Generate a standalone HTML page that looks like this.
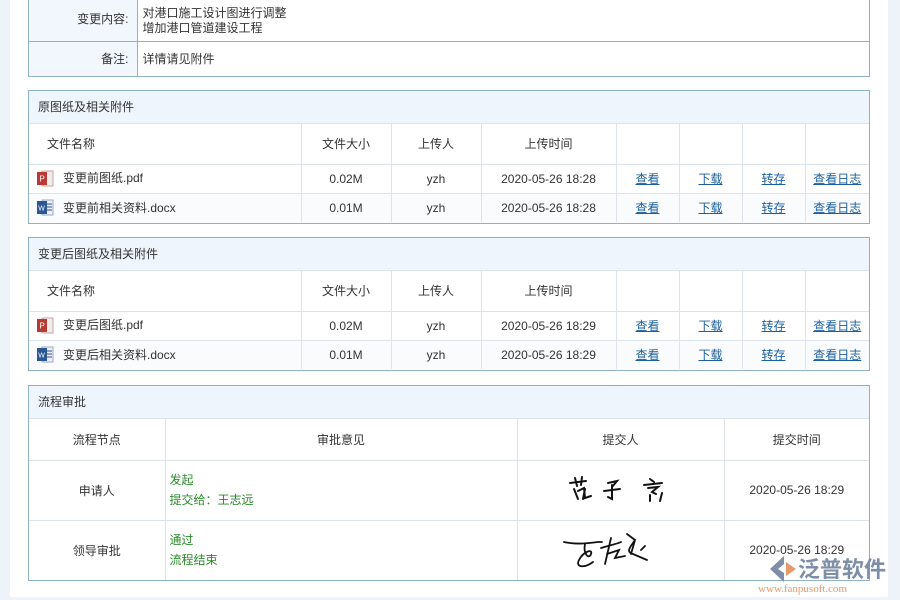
<!DOCTYPE html>
<html><head><meta charset="utf-8"><style>
*{box-sizing:border-box;margin:0;padding:0}
html,body{width:900px;height:600px;overflow:hidden}
body{background:#eef3fa;font-family:"Liberation Sans","Noto Sans CJK SC",sans-serif;font-size:12px;color:#333;position:relative}
.main{position:absolute;left:10px;top:0;width:878px;height:597px;background:#fff}
.box{position:absolute;left:28px;width:842px;border:1px solid #8fb1c8;overflow:hidden}
table{border-collapse:collapse;width:100%;table-layout:fixed}
td{border:1px solid #dde3ea;text-align:center;padding:0}
.hd{background:#eff5fd;height:33px;line-height:32px;padding-left:9px;border-bottom:1px solid #dde3ea}
a{color:#1a5f9e;text-decoration:underline}
.nm{text-align:left;padding-left:8px}
.ic{display:inline-block;width:17px;height:17px;vertical-align:middle;margin-right:9px;position:relative;top:-1px}
.alt td{background:#fafbfc}
.g{color:#2a8a2a;text-align:left;padding-left:4px;line-height:20px}
</style></head><body>
<div class="main"></div>
<div class="box" style="top:-4px;height:81px">
<table style="height:79px">
<tr style="height:44px"><td style="width:108px;background:#f2f7fd;text-align:right;padding-right:8px;border-color:#8fb1c8;border-left:0;border-top:0">变更内容:</td><td style="text-align:left;padding-left:5px;line-height:15px;border-color:#8fb1c8;border-right:0;border-top:0;padding-top:4px">对港口施工设计图进行调整<br>增加港口管道建设工程</td></tr>
<tr><td style="background:#f2f7fd;text-align:right;padding-right:8px;border-color:#8fb1c8;border-left:0;border-bottom:0">备注:</td><td style="text-align:left;padding-left:5px;border-color:#8fb1c8;border-right:0;border-bottom:0">详情请见附件</td></tr>
</table></div>

<div class="box" style="top:90px;height:134px"><div class="hd">原图纸及相关附件</div>
<table>
<tr style="height:40px"><td style="width:272px;text-align:left;padding-left:18px;border-left:0;border-top:0">文件名称</td><td style="width:90px;border-top:0">文件大小</td><td style="width:90px;border-top:0">上传人</td><td style="width:135px;border-top:0">上传时间</td><td style="width:63px;border-top:0"></td><td style="width:63px;border-top:0"></td><td style="width:63px;border-top:0"></td><td style="border-top:0;border-right:0"></td></tr>
<tr style="height:29px"><td class="nm" style="border-left:0"><svg class="ic" viewBox="0 0 17 17"><rect x="5" y="1" width="11" height="15" fill="#eee" stroke="#c9a0a0"/><rect x="0" y="2" width="10" height="13" fill="#b83b33"/><text x="2.5" y="11.5" font-size="8" fill="#fff" font-family="Liberation Sans">P</text></svg>变更前图纸.pdf</td><td>0.02M</td><td>yzh</td><td>2020-05-26 18:28</td><td><a>查看</a></td><td><a>下载</a></td><td><a>转存</a></td><td style="border-right:0"><a>查看日志</a></td></tr>
<tr class="alt" style="height:29px"><td class="nm" style="border-left:0;border-bottom:0"><svg class="ic" viewBox="0 0 17 17"><rect x="5" y="1" width="11" height="15" fill="#eef" stroke="#9ab"/><path d="M10 5h5M10 8h5M10 11h5" stroke="#2b5797"/><rect x="0" y="2" width="10" height="13" fill="#2b5797"/><text x="1.2" y="11.5" font-size="7" fill="#fff" font-family="Liberation Sans">W</text></svg>变更前相关资料.docx</td><td style="border-bottom:0">0.01M</td><td style="border-bottom:0">yzh</td><td style="border-bottom:0">2020-05-26 18:28</td><td style="border-bottom:0"><a>查看</a></td><td style="border-bottom:0"><a>下载</a></td><td style="border-bottom:0"><a>转存</a></td><td style="border-right:0;border-bottom:0"><a>查看日志</a></td></tr>
</table></div>

<div class="box" style="top:237px;height:134px"><div class="hd">变更后图纸及相关附件</div>
<table>
<tr style="height:40px"><td style="width:272px;text-align:left;padding-left:18px;border-left:0;border-top:0">文件名称</td><td style="width:90px;border-top:0">文件大小</td><td style="width:90px;border-top:0">上传人</td><td style="width:135px;border-top:0">上传时间</td><td style="width:63px;border-top:0"></td><td style="width:63px;border-top:0"></td><td style="width:63px;border-top:0"></td><td style="border-top:0;border-right:0"></td></tr>
<tr style="height:29px"><td class="nm" style="border-left:0"><svg class="ic" viewBox="0 0 17 17"><rect x="5" y="1" width="11" height="15" fill="#eee" stroke="#c9a0a0"/><rect x="0" y="2" width="10" height="13" fill="#b83b33"/><text x="2.5" y="11.5" font-size="8" fill="#fff" font-family="Liberation Sans">P</text></svg>变更后图纸.pdf</td><td>0.02M</td><td>yzh</td><td>2020-05-26 18:29</td><td><a>查看</a></td><td><a>下载</a></td><td><a>转存</a></td><td style="border-right:0"><a>查看日志</a></td></tr>
<tr class="alt" style="height:29px"><td class="nm" style="border-left:0;border-bottom:0"><svg class="ic" viewBox="0 0 17 17"><rect x="5" y="1" width="11" height="15" fill="#eef" stroke="#9ab"/><path d="M10 5h5M10 8h5M10 11h5" stroke="#2b5797"/><rect x="0" y="2" width="10" height="13" fill="#2b5797"/><text x="1.2" y="11.5" font-size="7" fill="#fff" font-family="Liberation Sans">W</text></svg>变更后相关资料.docx</td><td style="border-bottom:0">0.01M</td><td style="border-bottom:0">yzh</td><td style="border-bottom:0">2020-05-26 18:29</td><td style="border-bottom:0"><a>查看</a></td><td style="border-bottom:0"><a>下载</a></td><td style="border-bottom:0"><a>转存</a></td><td style="border-right:0;border-bottom:0"><a>查看日志</a></td></tr>
</table></div>

<div class="box" style="top:385px;height:196px"><div class="hd">流程审批</div>
<table>
<tr style="height:41px"><td style="width:136px;border-left:0;border-top:0">流程节点</td><td style="width:352px;border-top:0">审批意见</td><td style="width:207px;border-top:0">提交人</td><td style="border-top:0;border-right:0">提交时间</td></tr>
<tr style="height:60px"><td style="border-left:0">申请人</td><td class="g">发起<br>提交给：王志远</td><td><svg width="110" height="40" viewBox="0 0 110 40"><g fill="none" stroke="#111" stroke-width="2" stroke-linecap="round"><path d="M4 14l16-2M9 9l2 8M16 8l-1 8M8 20l4 10M12 22l6-3 1 10 6-2M19 20l-2 10"/><path d="M42 14l9-2-5 6M38 22l16-2M46 16l0 14-4-2"/><path d="M84 10l4 3M78 16l18-2M82 19l10-1-6 5 4 2M84 26l0 6M96 24l-2 8"/></g></svg></td><td style="border-right:0">2020-05-26 18:29</td></tr>
<tr style="height:60px"><td style="border-left:0;border-bottom:0">领导审批</td><td class="g" style="border-bottom:0">通过<br>流程结束</td><td style="border-bottom:0"><svg width="120" height="50" viewBox="0 0 120 50"><g fill="none" stroke="#111" stroke-width="1.8" stroke-linecap="round"><path d="M3 18c8 2 20 2 34 0l4 0"/><path d="M24 20c-2 10 4 16 6 10s-8-2-12 6 6 8 14 2"/><path d="M40 24c6-2 16-4 20-6M50 14l-6 26M46 30l12-4-4 8 10-2"/><path d="M66 10l8 6c-4 6-10 12-2 14l14 6M74 16l-4 14M80 26l4-4"/></g></svg></td><td style="border-right:0;border-bottom:0">2020-05-26 18:29</td></tr>
</table></div>

<div style="position:absolute;left:768px;top:556px;width:130px;height:40px;white-space:nowrap">
<svg width="28" height="26" style="position:absolute;left:2px;top:0" viewBox="0 0 28 26"><path d="M14 0L0 13l14 13V17l-6-4 6-5z" fill="#7e8ea8"/><path d="M16 6l10 7-10 7z" fill="#e8996b"/></svg>
<div style="position:absolute;left:30px;top:-2px;font-size:22px;color:#7e8ea8;font-weight:bold;font-family:'Noto Sans CJK SC',sans-serif;line-height:28px">泛普软件</div>
<div style="position:absolute;left:-10px;top:27px;font-size:11px;color:#e8996b;font-family:'Liberation Serif',serif">www.fanpusoft.com</div>
</div>
</body></html>
